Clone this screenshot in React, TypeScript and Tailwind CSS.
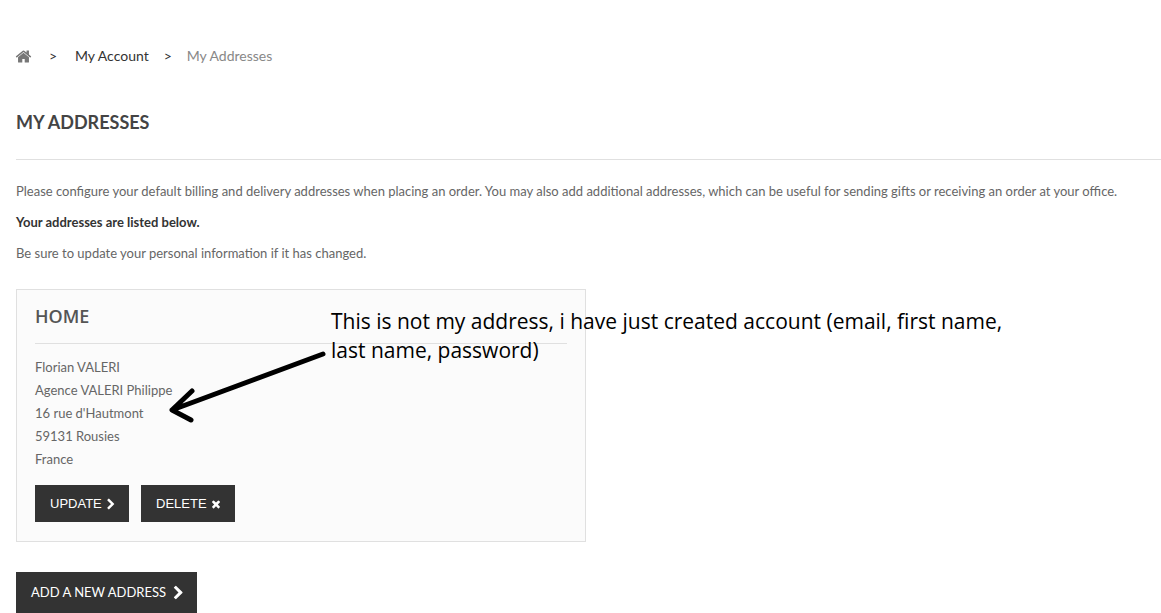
const iconPaths = {
  home: "M1472 992v480q0 26-19 45t-45 19H1024v-384H768v384H384q-26 0-45-19t-19-45V992q0-1 .5-3t.5-3l575-474 575 474q1 2 1 6zm223-69l-62 74q-8 9-21 11h-3q-13 0-21-7L896 424l-692 577q-12 8-24 7-13-2-21-11l-62-74q-8-10-7-23.5t11-21.5l719-599q32-26 76-26t76 26l244 204V288q0-14 9-23t23-9h192q14 0 23 9t9 23v408l219 182q10 8 11 21.5t-7 23.5z",
  chevron: "M1363 941l-742 742q-19 19-45 19t-45-19l-166-166q-19-19-19-45t19-45l531-531-531-531q-19-19-19-45t19-45l166-166q19-19 45-19t45 19l742 742q19 19 19 45t-19 45z",
  times: "M1490 1322q0 40-28 68l-136 136q-28 28-68 28t-68-28l-294-294-294 294q-28 28-68 28t-68-28l-136-136q-28-28-28-68t28-68l294-294-294-294q-28-28-28-68t28-68l136-136q28-28 68-28t68 28l294 294 294-294q28-28 68-28t68 28l136 136q28 28 28 68t-28 68l-294 294 294 294q28 28 28 68z",
};

function Icon({ name, className }: { name: keyof typeof iconPaths; className: string }) {
  return (
    <svg viewBox="0 0 1792 1792" fill="currentColor" aria-hidden="true" className={className}>
      <path d={iconPaths[name]} />
    </svg>
  );
}

const addressLines = [
  "Florian VALERI",
  "Agence VALERI Philippe",
  "16 rue d'Hautmont",
  "59131 Rousies",
  "France",
];

function Breadcrumb() {
  return (
    <nav aria-label="Breadcrumb" className="flex h-6 items-center text-sm text-[#333]">
      <a href="#home" aria-label="Home" className="w-[33px] text-[#777]">
        <Icon name="home" className="-ml-px size-[17px]" />
      </a>
      <span className="w-[26px]">&gt;</span>
      <a href="#account">My Account</a>
      <span className="ml-[15px] w-[23px]">&gt;</span>
      <span className="text-[#888]">My Addresses</span>
    </nav>
  );
}

function Note() {
  return (
    <div className="absolute top-[17px] left-[152px]">
      <svg width="164" height="76" viewBox="0 0 164 76" className="absolute top-[41px] left-0" fill="none" stroke="#000" strokeWidth="5" strokeLinecap="round" strokeLinejoin="round">
        <path d="M154 6 L3 62 M23 43 L3 62 L22 72" />
      </svg>
      <p className="ml-[162px] whitespace-nowrap font-['Open_Sans','Noto_Sans',sans-serif] text-[21px] leading-[29px] text-black">
        This is not my address, i have just created account (email, first name,
        <br />
        last name, password)
      </p>
    </div>
  );
}

export default function App() {
  return (
    <main className="pt-11 pl-4 font-[Lato,sans-serif] text-[13px] text-[#666]">
      <Breadcrumb />
      <h1 className="mt-10 border-b border-[#e0e0e0] pb-[23px] text-lg leading-7 font-bold text-[#444]">MY ADDRESSES</h1>
      <p className="mt-5 leading-[23px]">
        Please configure your default billing and delivery addresses when placing an order. You may also add additional addresses, which can be useful for sending gifts or receiving an order at your office.
      </p>
      <p className="mt-2 leading-[23px] font-bold text-[#333]">Your addresses are listed below.</p>
      <p className="mt-2 leading-[23px]">Be sure to update your personal information if it has changed.</p>
      <section className="relative mt-6 w-1/2 max-w-[570px] border border-[#e0e0e0] bg-[#fbfbfb] px-[18px] pt-3 pb-[19px]">
        <h2 className="border-b border-[#e0e0e0] pb-[13px] font-['Open_Sans',sans-serif] text-lg leading-7 font-semibold text-[#555]">HOME</h2>
        <address className="mt-3 leading-[23px] not-italic">
          {addressLines.map((line) => (
            <div key={line}>{line}</div>
          ))}
        </address>
        <div className="mt-3.5 flex gap-3 font-['Liberation_Sans',sans-serif] text-[13px] text-white">
          <button className="flex h-[37px] w-[94px] items-center gap-[3px] bg-[#333] pl-[15px]">UPDATE <Icon name="chevron" className="size-3" /></button>
          <button className="flex h-[37px] w-[94px] items-center gap-[3px] bg-[#333] pl-[15px]">DELETE <Icon name="times" className="size-3" /></button>
        </div>
        <Note />
      </section>
      <button className="mt-[30px] flex h-[41px] w-[181px] items-center gap-[5px] bg-[#333] pl-[15px] text-[13px] text-white">ADD A NEW ADDRESS <Icon name="chevron" className="size-[15px]" /></button>
    </main>
  );
}
